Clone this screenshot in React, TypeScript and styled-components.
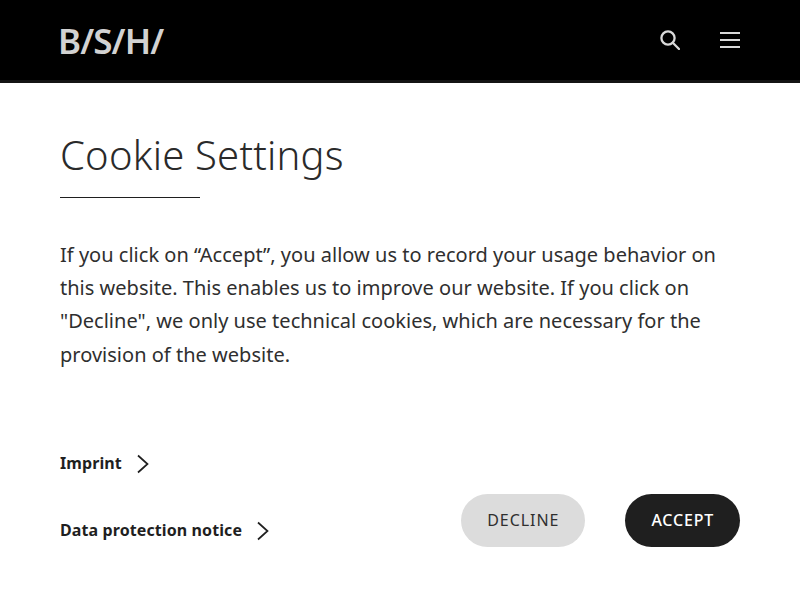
import React from 'react';
import styled, { createGlobalStyle } from 'styled-components';

const GlobalStyle = createGlobalStyle`
  html, body {
    margin: 0;
    padding: 0;
    background: #ffffff;
    font-family: "Noto Sans", "Open Sans", sans-serif;
    color: #1f1f1f;
  }
  * {
    box-sizing: border-box;
  }
`;

const Page = styled.div`
  width: 800px;
  height: 600px;
  overflow: hidden;
  display: flex;
  flex-direction: column;
`;

const Header = styled.header`
  height: 83px;
  flex: none;
  background: #000000;
  border-bottom: 3px solid #141414;
  padding: 0 60px;
  display: flex;
  justify-content: space-between;
  align-items: center;
`;

const Logo = styled.a`
  margin-left: -2px;
  font-size: 35px;
  font-weight: 600;
  letter-spacing: -0.9px;
  line-height: 1;
  color: #d2d2d2;
  text-decoration: none;
`;

const HeaderIcons = styled.div`
  display: flex;
  align-items: center;
  gap: 40px;
`;

const IconButton = styled.button`
  width: 20px;
  height: 30px;
  padding: 0;
  border: none;
  background: transparent;
  color: #d9d9d9;
  display: flex;
  align-items: center;
  justify-content: center;
`;

const Content = styled.main`
  flex: 1;
  padding: 46px 60px 53px;
  display: flex;
  flex-direction: column;
`;

const Title = styled.h1`
  margin: 0;
  font-size: 40px;
  font-weight: 300;
  line-height: 52px;
  letter-spacing: 0.2px;
  color: #2a2a2a;
`;

const TitleRule = styled.div`
  width: 140px;
  height: 1px;
  margin-top: 16px;
  background: #1f1f1f;
`;

const Message = styled.p`
  margin: 40px 0 0;
  font-size: 20px;
  line-height: 33.2px;
  letter-spacing: 0.015px;
  color: #2f2f2f;
`;

const Footer = styled.div`
  margin-top: auto;
  display: flex;
  justify-content: space-between;
  align-items: flex-end;
`;

const Links = styled.div`
  display: flex;
  flex-direction: column;
  gap: 44px;
  margin-bottom: 5px;
`;

const TextLink = styled.a`
  display: flex;
  align-items: center;
  gap: 14px;
  font-size: 16px;
  font-weight: 700;
  line-height: 23px;
  letter-spacing: 0.1px;
  color: #1f1f1f;
  text-decoration: none;
`;

const Actions = styled.div`
  display: flex;
  gap: 40px;
`;

const PillButton = styled.button<{ $primary?: boolean }>`
  height: 53px;
  padding: 0 26px 2px;
  border: none;
  border-radius: 27px;
  font-family: inherit;
  font-size: 16px;
  letter-spacing: ${p => (p.$primary ? '0.8px' : '0.95px')};
  font-weight: ${p => (p.$primary ? 500 : 400)};
  background: ${p => (p.$primary ? '#1f1f1f' : '#dcdcdc')};
  color: ${p => (p.$primary ? '#ffffff' : '#2f2f2f')};
`;

const SearchIcon = () => (
  <svg width="20" height="20" viewBox="0 0 20 20" fill="none" stroke="currentColor" strokeWidth="2.3">
    <circle cx="8" cy="8" r="6.6" />
    <path d="M12.8 12.8l6.2 6.2" strokeLinecap="round" />
  </svg>
);

const MenuIcon = () => (
  <svg width="20" height="18" viewBox="0 0 20 18" fill="none" stroke="currentColor" strokeWidth="2">
    <path d="M0 2h20M0 9h20M0 16h20" />
  </svg>
);

const Chevron = () => (
  <svg width="14" height="20" viewBox="0 0 14 20" fill="none" stroke="#1f1f1f" strokeWidth="1.7">
    <path d="M2 1.5l9.5 8.5L2 18.5" />
  </svg>
);

const App: React.FC = () => {
  return (
    <Page>
      <GlobalStyle />
      <Header>
        <Logo href="#">B/S/H/</Logo>
        <HeaderIcons>
          <IconButton aria-label="Search"><SearchIcon /></IconButton>
          <IconButton aria-label="Menu"><MenuIcon /></IconButton>
        </HeaderIcons>
      </Header>
      <Content>
        <Title>Cookie Settings</Title>
        <TitleRule />
        <Message>
          If you click on “Accept”, you allow us to record your usage behavior on this website. This enables us to improve our website. If you click on "Decline", we only use technical cookies, which are necessary for the provision of the website.
        </Message>
        <Footer>
          <Links>
            <TextLink href="#">Imprint <Chevron /></TextLink>
            <TextLink href="#">Data protection notice <Chevron /></TextLink>
          </Links>
          <Actions>
            <PillButton>DECLINE</PillButton>
            <PillButton $primary>ACCEPT</PillButton>
          </Actions>
        </Footer>
      </Content>
    </Page>
  );
};

export default App;
